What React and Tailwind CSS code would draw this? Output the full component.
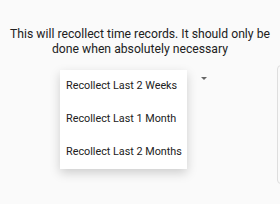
export default function App() {
  return (
    <div className="relative w-[280px] h-[204px] bg-[#fafafa] overflow-hidden" style={{ fontFamily: "Roboto, sans-serif" }}>
      <div className="absolute right-[-10px] top-[65px] w-[13px] h-[119px] border border-[#dedede] rounded-[4px] bg-[#fafafa]" />
      <div className="pt-[27px] px-[6px] text-center text-[12.2px] leading-[15px] text-[#212121]">
        This will recollect time records. It should only be done when absolutely necessary
      </div>
      <div className="relative mt-[4px] h-[120px]">
        <div className="absolute left-[201px] top-[16px] w-0 h-0 border-l-[3px] border-r-[3px] border-t-[3.5px] border-l-transparent border-r-transparent border-t-[#666]" />
        <div className="absolute left-[60px] top-[9px] w-[127px] bg-white shadow-[0_4px_10px_rgba(0,0,0,0.18)] text-[10.8px] text-[#212121] whitespace-nowrap">
          <div className="h-[33px] flex items-center pl-[6px]">Recollect Last 2 Weeks</div>
          <div className="h-[33px] flex items-center pl-[6px]">Recollect Last 1 Month</div>
          <div className="h-[33px] flex items-center pl-[6px]">Recollect Last 2 Months</div>
        </div>
      </div>
    </div>
  );
}
